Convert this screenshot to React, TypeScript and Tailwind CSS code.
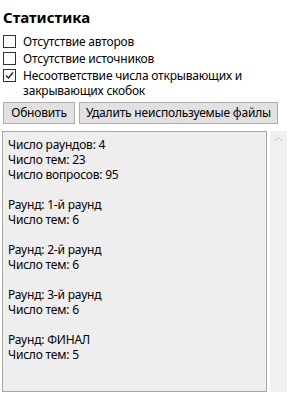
import React from "react";

const lines = [
  "Число раундов: 4",
  "Число тем: 23",
  "Число вопросов: 95",
  "",
  "Раунд: 1-й раунд",
  "Число тем: 6",
  "",
  "Раунд: 2-й раунд",
  "Число тем: 6",
  "",
  "Раунд: 3-й раунд",
  "Число тем: 6",
  "",
  "Раунд: ФИНАЛ",
  "Число тем: 5",
];

function Check({ checked }: { checked?: boolean }) {
  return (
    <span className="w-[13px] h-[13px] shrink-0 border border-[#333333] bg-white flex items-center justify-center">
      {checked && (
        <svg width="9" height="9" viewBox="0 0 9 9">
          <path d="M1 4.5 L3.5 7 L8 1.5" fill="none" stroke="#1f1f1f" strokeWidth="1.4" />
        </svg>
      )}
    </span>
  );
}

function App() {
  return (
    <div className="w-[293px] h-[395px] bg-white font-['Noto_Sans',sans-serif] text-[12px] tracking-[-0.2px] text-black flex flex-col overflow-hidden">
      <h1 className="font-bold text-[15px] leading-5 pl-[3px] pt-[7px] tracking-normal">Статистика</h1>

      {/* Checks */}
      <div className="flex flex-col pl-[3px] mt-[7px] gap-[2px] leading-[15px]">
        <label className="flex items-start gap-[7px]">
          <span className="mt-[1px]"><Check /></span>
          <span>Отсутствие авторов</span>
        </label>
        <label className="flex items-start gap-[7px]">
          <span className="mt-[1px]"><Check /></span>
          <span>Отсутствие источников</span>
        </label>
        <label className="flex items-start gap-[7px]">
          <span className="mt-[1px]"><Check checked /></span>
          <span>
            Несоответствие числа открывающих и
            <br />
            закрывающих скобок
          </span>
        </label>
      </div>

      {/* Buttons */}
      <div className="flex gap-[4px] pl-[3px] mt-[4px]">
        <button className="h-[22px] w-[72px] bg-[#e1e1e1] border border-[#adadad]">Обновить</button>
        <button className="h-[22px] w-[199px] bg-[#e1e1e1] border border-[#adadad]">
          Удалить неиспользуемые файлы
        </button>
      </div>

      {/* Output */}
      <div className="flex mt-[7px] pl-[2px] h-[261px]">
        <div className="w-[265px] h-full bg-[#eeeeee] border border-[#a5a5a5] px-[5px] pt-[5px] leading-[15px]">
          {lines.map((l, i) => (
            <div key={i} className="h-[15px]">{l}</div>
          ))}
        </div>
        <div className="ml-[3px] w-[17px] h-full bg-[#f0f0f0] flex justify-center pt-[5px]">
          <svg width="9" height="6" viewBox="0 0 9 6">
            <path d="M1 5 L4.5 1.5 L8 5" fill="none" stroke="#c4c4c4" strokeWidth="1" />
          </svg>
        </div>
      </div>
    </div>
  );
}

export default App;
